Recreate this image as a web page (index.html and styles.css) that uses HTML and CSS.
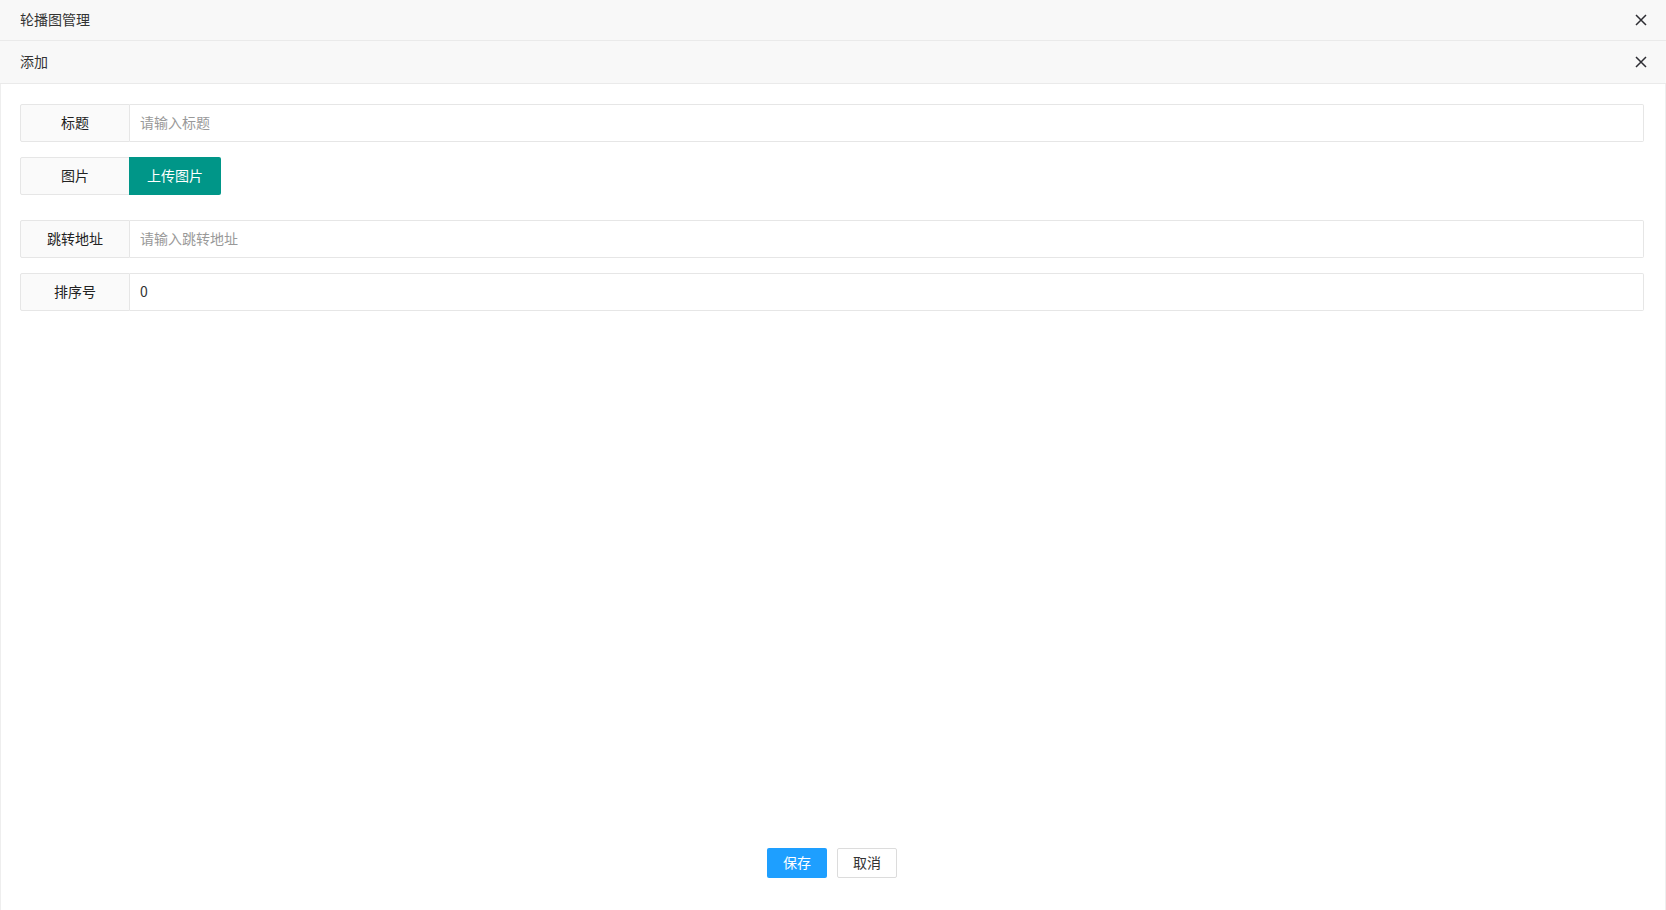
FILE: index.html
```html
<!DOCTYPE html>
<html lang="zh-CN">
<head>
  <meta charset="UTF-8" />
  <title>轮播图管理</title>
  <link rel="stylesheet" href="styles.css">
</head>
<body>
  <div class="bar bar-top">
    <span>轮播图管理</span>
    <a class="close" href="#"><svg viewBox="0 0 12 12" width="12" height="12"><path d="M1 1L11 11M11 1L1 11" stroke="#2d2d33" stroke-width="1.5" fill="none"/></svg></a>
  </div>
  <div class="bar bar-sub">
    <span>添加</span>
    <a class="close" href="#"><svg viewBox="0 0 12 12" width="12" height="12"><path d="M1 1L11 11M11 1L1 11" stroke="#2d2d33" stroke-width="1.5" fill="none"/></svg></a>
  </div>

  <form class="panel" onsubmit="return false">
    <div class="fields">
      <div class="item">
        <label>标题</label>
        <input type="text" placeholder="请输入标题">
      </div>
      <div class="item item-upload">
        <label>图片</label>
        <button type="button" class="btn-upload">上传图片</button>
      </div>
      <div class="item">
        <label>跳转地址</label>
        <input type="text" placeholder="请输入跳转地址">
      </div>
      <div class="item">
        <label>排序号</label>
        <input type="text" value="0">
      </div>
    </div>
    <div class="foot">
      <button type="submit" class="btn btn-save">保存</button>
      <button type="button" class="btn btn-cancel">取消</button>
    </div>
  </form>
</body>
</html>
```

FILE: styles.css
```css
*{box-sizing:border-box;font-family:"Helvetica Neue","Noto Sans CJK SC",sans-serif}
html,body{height:100%}
body{margin:0;display:flex;flex-direction:column;background:#fff;color:#333;font-size:14px}
.bar{display:flex;align-items:center;justify-content:space-between;padding:0 19px 2px 20px;background:#f8f8f8;border-bottom:1px solid #eaeaea;color:#333}
.bar .close{margin-top:2px}
.bar-top{height:41px}
.bar-sub{height:43px}
.close{display:flex;width:12px;height:12px}
.panel{flex:1;display:flex;flex-direction:column;border-left:1px solid #eee;border-right:1px solid #eee;padding:20px 21px 0 19px}
.fields{flex:1}
.item{display:flex;height:38px;margin-bottom:15px}
.item-upload{margin-bottom:25px}
.item label{width:110px;flex:none;display:flex;align-items:center;justify-content:center;padding-bottom:2px;background:#fafafa;border:1px solid #e6e6e6;border-radius:2px 0 0 2px;color:#222}
.item input{flex:1;min-width:0;height:38px;border:1px solid #e6e6e6;border-left:none;border-radius:0 2px 2px 0;padding:0 10px 2px;font-size:14px;color:#333;outline:none}
.item input::placeholder{color:#999}
.btn-upload{height:38px;margin-left:-1px;padding:0 18px 2px;border:none;border-radius:0 2px 2px 0;background:#009688;color:#fff;font-size:14px;cursor:pointer}
.foot{display:flex;justify-content:center;gap:10px;padding:0 0 32px 0}
.btn{height:30px;width:60px;padding:0 0 2px;font-size:14px;border-radius:2px;cursor:pointer}
.btn-save{background:#1e9fff;border:none;color:#fff}
.btn-cancel{background:#fff;border:1px solid #dcdcdc;color:#333}
```
